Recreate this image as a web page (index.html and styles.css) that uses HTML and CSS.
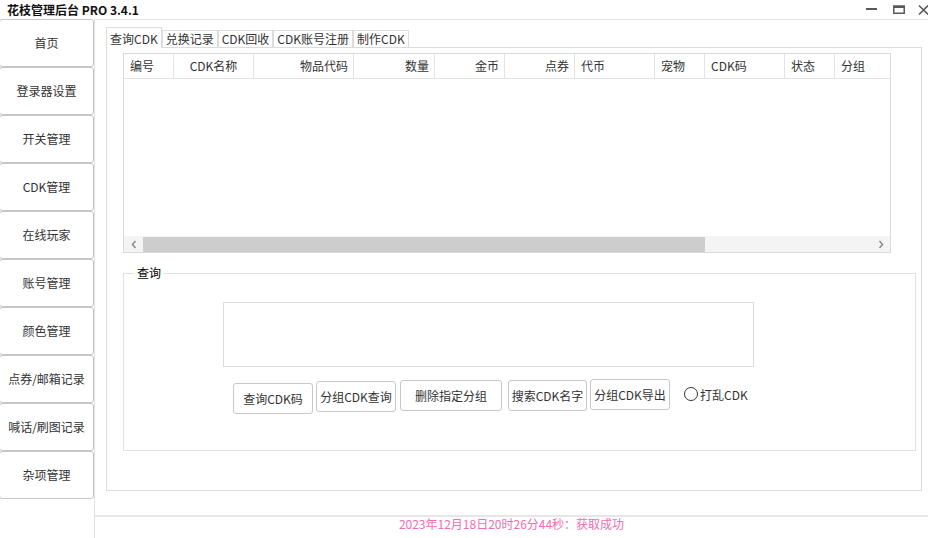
FILE: index.html
```html
<!DOCTYPE html>
<html>
<head>
  <meta charset="utf-8">
  <title>花枝管理后台 PRO 3.4.1</title>
  <link rel="stylesheet" href="styles.css">
</head>
<body>
  <div class="titlebar">
    <div class="title">花枝管理后台 PRO 3.4.1</div>
    <div class="winctl">
      <svg class="ic-min" width="12" height="12" viewBox="0 0 12 12"><rect x="0" y="4" width="11" height="2" fill="#5a5a5a"/></svg>
      <svg class="ic-max" width="12" height="12" viewBox="0 0 12 12"><rect x="0.75" y="2.25" width="10.5" height="7" fill="none" stroke="#5a5a5a" stroke-width="1.5"/><rect x="0" y="1.5" width="12" height="2.5" fill="#5a5a5a"/></svg>
      <svg class="ic-close" width="11" height="12" viewBox="0 0 11 12"><path d="M1 1.5 L10 10.5 M10 1.5 L1 10.5" stroke="#5a5a5a" stroke-width="1.6" fill="none"/></svg>
    </div>
  </div>

  <div class="main">
    <nav class="sidebar">
      <button class="nav-btn">首页</button>
      <button class="nav-btn">登录器设置</button>
      <button class="nav-btn">开关管理</button>
      <button class="nav-btn">CDK管理</button>
      <button class="nav-btn">在线玩家</button>
      <button class="nav-btn">账号管理</button>
      <button class="nav-btn">颜色管理</button>
      <button class="nav-btn">点券/邮箱记录</button>
      <button class="nav-btn">喊话/刷图记录</button>
      <button class="nav-btn">杂项管理</button>
    </nav>

    <div class="content">
      <div class="tab-area">
        <div class="tabs">
          <div class="tab active">查询CDK</div>
          <div class="tab">兑换记录</div>
          <div class="tab">CDK回收</div>
          <div class="tab">CDK账号注册</div>
          <div class="tab">制作CDK</div>
        </div>

        <div class="tab-panel">
          <div class="listview">
            <div class="lv-head">
              <div class="col w50 left">编号</div>
              <div class="col w80 center">CDK名称</div>
              <div class="col w100 right">物品代码</div>
              <div class="col w81 right">数量</div>
              <div class="col w70 right">金币</div>
              <div class="col w70 right">点券</div>
              <div class="col w80 left">代币</div>
              <div class="col w50 left">宠物</div>
              <div class="col w80 left">CDK码</div>
              <div class="col w50 left">状态</div>
              <div class="col w80 left">分组</div>
            </div>
            <div class="lv-body"></div>
            <div class="hscroll">
              <span class="arrow"><svg width="6" height="9" viewBox="0 0 6 9"><path d="M4.5 1 L1.5 4.5 L4.5 8" stroke="#8a8a8a" stroke-width="1.5" fill="none"/></svg></span>
              <div class="track"><div class="thumb"></div></div>
              <span class="arrow"><svg width="6" height="9" viewBox="0 0 6 9"><path d="M1.5 1 L4.5 4.5 L1.5 8" stroke="#8a8a8a" stroke-width="1.5" fill="none"/></svg></span>
            </div>
          </div>

          <fieldset class="group">
            <legend>查询</legend>
            <textarea class="query-input"></textarea>
            <div class="actions">
              <button class="btn b1">查询CDK码</button>
              <button class="btn b2">分组CDK查询</button>
              <button class="btn b3">删除指定分组</button>
              <button class="btn b4">搜索CDK名字</button>
              <button class="btn b5">分组CDK导出</button>
              <label class="radio"><span class="dot"></span>打乱CDK</label>
            </div>
          </fieldset>
        </div>
      </div>

      <div class="status">2023年12月18日20时26分44秒：获取成功</div>
    </div>
  </div>
</body>
</html>
```

FILE: styles.css
```css
* {
  box-sizing: border-box;
}
body {
  margin: 0;
  width: 928px;
  height: 538px;
  overflow: hidden;
  background: #fff;
  font-family: "Noto Sans CJK SC", "Microsoft YaHei", sans-serif;
  font-size: 12px;
  color: #333;
}
.titlebar {
  height: 19px;
  display: flex;
  align-items: center;
  justify-content: space-between;
}
.title {
  padding-left: 7px;
  font-weight: bold;
  color: #111;
  line-height: 19px;
}
.winctl {
  display: flex;
  align-items: center;
  margin-right: -1px;
}
.ic-max {
  margin-left: 15px;
}
.ic-close {
  margin-left: 13px;
}
.main {
  display: flex;
  height: 519px;
}
.sidebar {
  width: 94px;
  display: flex;
  flex-direction: column;
}
.nav-btn {
  width: 95px;
  height: 48px;
  margin-left: -1px;
  padding: 0 0 2px;
  border: 1px solid #c6c6c6;
  border-radius: 3px;
  background: #fff;
  font: inherit;
  color: #333;
}
.content {
  flex: 1;
  border-left: 1px solid #e2e2e2;
  border-top: 1px solid #e6e6e6;
}
.tab-area {
  padding: 7px 0 0 11px;
}
.tabs {
  display: flex;
  align-items: flex-end;
  height: 20px;
}
.tab {
  height: 17px;
  line-height: 16px;
  padding: 0 3px;
  border: 1px solid #dcdcdc;
  border-bottom: none;
  background: #fff;
  white-space: nowrap;
}
.tab.active {
  position: relative;
  height: 21px;
  padding-top: 3px;
  margin-bottom: -1px;
}
.tab-panel {
  width: 816px;
  height: 444px;
  border: 1px solid #dcdcdc;
  padding: 5px 0 0 16px;
}
.listview {
  width: 768px;
  height: 200px;
  border: 1px solid #dadada;
  display: flex;
  flex-direction: column;
  overflow: hidden;
}
.lv-head {
  display: flex;
  flex-shrink: 0;
  height: 25px;
  border-bottom: 1px solid #e3e3e3;
}
.col {
  flex-shrink: 0;
  line-height: 24px;
  padding: 0 6px;
  border-right: 1px solid #e3e3e3;
  white-space: nowrap;
}
.w50 { width: 50px; }
.w70 { width: 70px; }
.w80 { width: 80px; }
.w81 { width: 81px; }
.w100 { width: 100px; }
.left { text-align: left; }
.center { text-align: center; }
.right { text-align: right; padding-right: 5px; }
.lv-body {
  flex: 1;
}
.hscroll {
  flex-shrink: 0;
  height: 16px;
  display: flex;
  background: #f4f4f4;
}
.arrow {
  width: 19px;
  display: flex;
  align-items: center;
  justify-content: center;
}
.track {
  flex: 1;
}
.thumb {
  width: 562px;
  height: 15px;
  margin-top: 1px;
  background: #cdcdcd;
}
.group {
  width: 793px;
  height: 186px;
  margin: 12px 0 0;
  padding: 0;
  border: 1px solid #e0e0e0;
  min-inline-size: 0;
}
.group legend {
  margin-left: 10px;
  padding: 0 3px;
  line-height: 16px;
  color: #000;
}
.query-input {
  display: block;
  width: 531px;
  height: 65px;
  margin: 21px 0 0 99px;
  border: 1px solid #dcdcdc;
  resize: none;
  outline: none;
}
.actions {
  display: flex;
  align-items: flex-start;
  margin: 12px 0 0 109px;
}
.btn {
  height: 31px;
  padding: 0;
  border: 1px solid #c8c8c8;
  border-radius: 3px;
  background: #fff;
  font: inherit;
  color: #333;
  white-space: nowrap;
}
.b1 { width: 80px; margin-top: 4px; }
.b2 { width: 80px; margin: 2px 0 0 3px; }
.b3 { width: 102px; margin: 1px 0 0 4px; }
.b4 { width: 79px; margin: 1px 0 0 6px; }
.b5 { width: 80px; margin-left: 3px; }
.radio {
  display: flex;
  align-items: center;
  gap: 2px;
  height: 16px;
  margin: 7px 0 0 14px;
  color: #333;
}
.dot {
  width: 14px;
  height: 14px;
  border: 1px solid #333;
  border-radius: 50%;
}
.status {
  margin-top: 24px;
  border-top: 2px solid #e6e6e6;
  text-align: center;
  line-height: 14px;
  color: #f06eb4;
}
```
